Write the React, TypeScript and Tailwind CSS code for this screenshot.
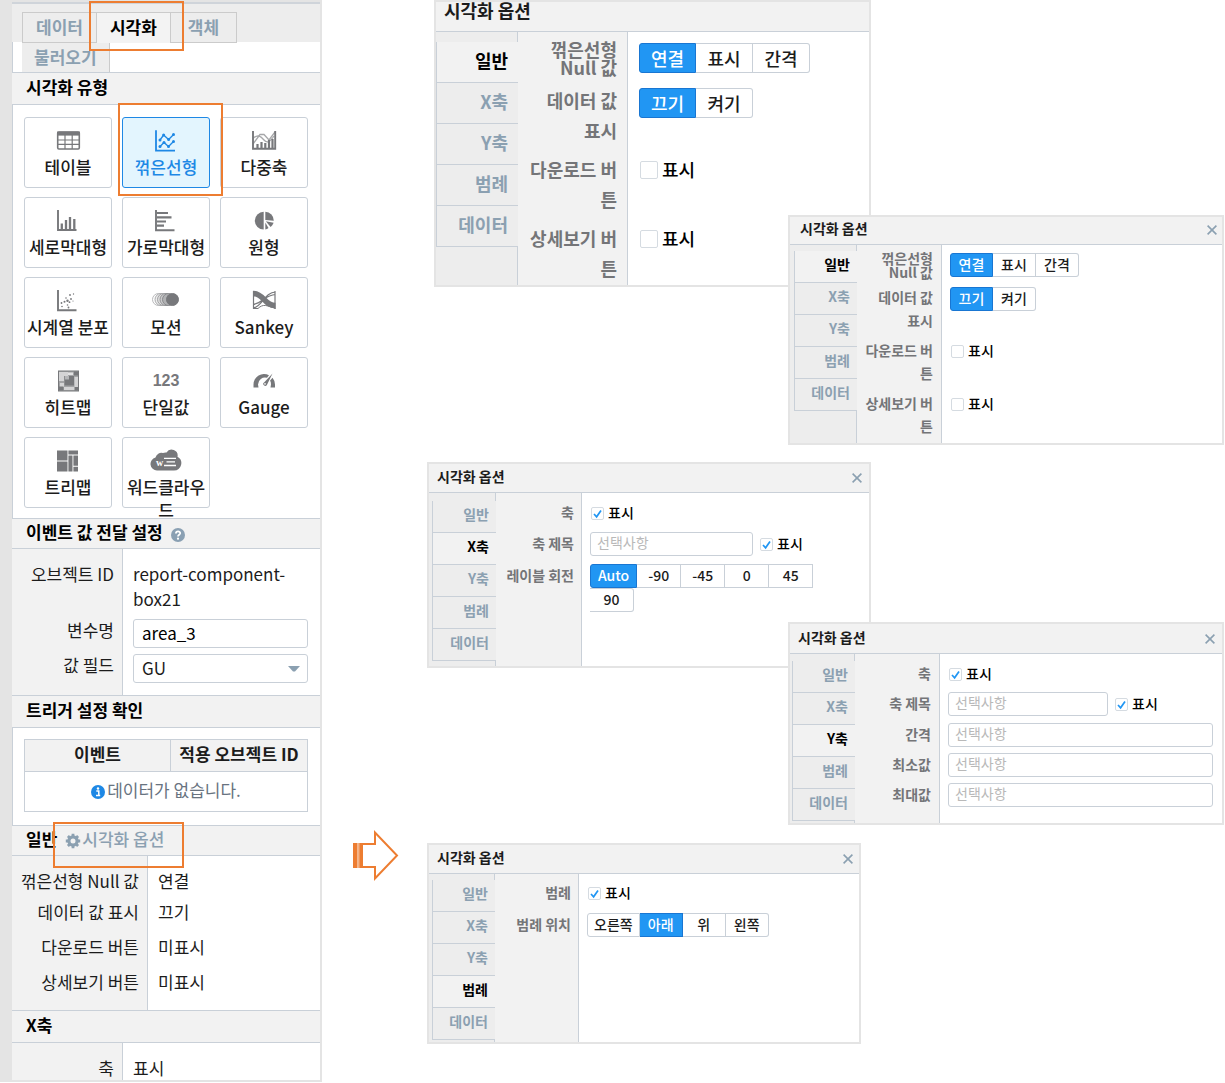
import { useState, type ReactNode } from "react";

/* ---------- icons ---------- */

function Icon({ children }: { children: ReactNode }) {
  return (
    <svg viewBox="0 0 32 24" className="h-6 w-8" fill="none" stroke="currentColor" aria-hidden="true">
      {children}
    </svg>
  );
}

const icons: Record<string, ReactNode> = {
  table: (
    <Icon>
      <rect x="5.7" y="3" width="21.6" height="17" rx="1.2" strokeWidth="1.6" />
      <path d="M5 4.6h23" strokeWidth="4" />
      <path d="M5 11h23M5 15.4h23M13 6v14M20.2 6v14" strokeWidth="1.2" />
    </Icon>
  ),
  line: (
    <Icon>
      <path d="M6 1.2v20.4h19" strokeWidth="1.8" />
      <path d="M10 11l3.600-5 5 4.500 5-5M10 17.500l4-4 4.500 4 5-5" strokeWidth="1.3" />
      <g fill="currentColor" stroke="none">
        <circle cx="10" cy="11" r="1.500" />
        <circle cx="13.600" cy="6" r="1.500" />
        <circle cx="18.600" cy="10.500" r="1.500" />
        <circle cx="23.500" cy="5.500" r="1.500" />
        <circle cx="10" cy="17.500" r="1.500" />
        <circle cx="14" cy="13.500" r="1.500" />
        <circle cx="18.500" cy="17.500" r="1.500" />
        <circle cx="23.500" cy="12.500" r="1.500" />
      </g>
    </Icon>
  ),
  multi: (
    <Icon>
      <path d="M5 2v17.800h22.200V2" strokeWidth="1.900" />
      <path d="M9.500 19v-4M13.500 19v-6M17.300 19v-5M21 19v-8M24.500 19v-9" strokeWidth="2.200" />
      <path d="M5 15L12 5.500h4L21 11l6-8M5 9.500c5-5 8-2 11 1.500s6 2 10-4" strokeWidth="1.300" opacity=".65" />
    </Icon>
  ),
  bar: (
    <Icon>
      <path d="M6 1v20h18.500" strokeWidth="1.900" />
      <path d="M9.800 20v-5.500M14 20V11M18 20V8M22.300 20V10" strokeWidth="2.300" />
    </Icon>
  ),
  hbar: (
    <Icon>
      <path d="M6 1v20.200h18.500" strokeWidth="1.900" />
      <path d="M7 4h11M7 8.300h14.500M7 12.500h9M7 16.700h7" strokeWidth="2.200" />
    </Icon>
  ),
  pie: (
    <Icon>
      <g fill="currentColor" stroke="none">
        <path d="M15.700 2.800A8.900 8.900 0 0 0 15.700 20.600Z" />
        <path d="M17.300 2.800a8.800 8.800 0 0 1 8.500 9l-8.500-.9Z" />
        <path d="M17.800 12.300l7.800 1.400a8.400 8.400 0 0 1-3 4.200Z" />
        <path d="M17.300 13.500l3.200 5.500a6 6 0 0 1-3.200 1.400Z" />
      </g>
    </Icon>
  ),
  scatter: (
    <Icon>
      <path d="M6 1v20.200h18.500" strokeWidth="1.900" />
      <g fill="currentColor" stroke="none">
        <circle cx="9.500" cy="14" r=".9" />
        <circle cx="12.500" cy="12.800" r="1" />
        <circle cx="15.500" cy="11.800" r="1.200" />
        <circle cx="17.500" cy="13.200" r=".9" />
        <circle cx="14" cy="9" r=".8" />
        <circle cx="18" cy="6" r=".9" />
        <circle cx="21.500" cy="5" r=".7" />
        <circle cx="19" cy="10" r=".9" />
        <circle cx="10" cy="17.500" r=".8" />
        <circle cx="15.500" cy="16" r=".8" />
        <circle cx="16.500" cy="18.500" r=".9" />
        <circle cx="21" cy="12" r=".6" />
      </g>
    </Icon>
  ),
  motion: (
    <Icon>
      <g fill="#fff" strokeWidth="1">
        <circle cx="8.500" cy="10.500" r="6" stroke="#b9babc" />
        <circle cx="11" cy="10.500" r="6" fill="#ececec" stroke="#a9aaac" />
        <circle cx="13.500" cy="10.500" r="6" fill="#dedede" stroke="#a0a1a3" />
        <circle cx="16" cy="10.500" r="6" fill="#cbcbcc" stroke="#929396" />
        <circle cx="18.500" cy="10.500" r="6" fill="#b0b1b3" stroke="#88898c" />
        <circle cx="22.500" cy="10.500" r="6" fill="currentColor" stroke="#77787b" />
      </g>
    </Icon>
  ),
  sankey: (
    <Icon>
      <path d="M5 4.500c11 0 11 12 22.500 12" strokeWidth="5.500" />
      <path d="M5 19C13 19 17 3 27.500 3M5 15.500c9-1 12-9.500 22.500-10M5.500 2v18M27 2v18" strokeWidth="1.200" />
      <path d="M5 19.500h5c5-5 9-3 17.500 0" strokeWidth="1" />
    </Icon>
  ),
  heatmap: (
    <Icon>
      <rect x="6.500" y="2" width="20" height="20" fill="#a3a4a6" stroke="#77787b" />
      <path d="M7 3h9v4h-4v5H7zM8 14h4v4H8zM12 18h11v3H12zM22.500 8H26v10h-3.500z" fill="#d4d4d5" stroke="none" />
      <path d="M16 3.500h5v2.500h-5z" fill="#e2e2e3" stroke="none" />
      <path d="M22 2.500h4.500v4H22zM7 17.500h4.500v4H7zM22.500 18h4v3.500h-4z" fill="#77787b" stroke="none" />
      <path d="M12.500 7h9.500v9.500h-9.500z" fill="#77787b" stroke="none" />
      <path d="M13 7h4v3.500h-4z" fill="#b5b6b8" stroke="none" />
    </Icon>
  ),
  gauge: (
    <Icon>
      <path d="M5.500 18.500v-3a10.500 10.500 0 0 1 15.500-9.300l-2 2.600A7 7 0 0 0 10 15.500l.5 3z" fill="currentColor" stroke="none" />
      <path d="M24.500 8.800a11 11 0 0 1 2.500 6.700v3h-4.500l.5-3a7 7 0 0 0-.9-4z" fill="currentColor" stroke="none" />
      <path d="M24.500 4.500l-8.200 8.800a1.900 1.900 0 1 0 2.600 2.600z" fill="currentColor" stroke="none" />
      <circle cx="17" cy="14.900" r=".8" fill="#fff" stroke="none" />
    </Icon>
  ),
  treemap: (
    <Icon>
      <path
        d="M5 1.500h10.500v10H5zM5 12.500h10.500V22.500H5zM16.400 1.500H26v3.900h-9.600zM16.400 6.400h4.100V22.500h-4.100zM21.400 6.400H26v10.300h-4.600zM21.400 17.700H26V22.500h-4.600z"
        fill="currentColor"
        stroke="none"
      />
    </Icon>
  ),
  cloud: (
    <Icon>
      <path
        d="M7 21.500a6.600 6.600 0 0 1-1.500-13A6 6 0 0 1 13 4a6.500 6.500 0 0 1 3.500-.5 6 6 0 0 1 11 4.300A7.300 7.300 0 0 1 24 21.500z"
        fill="currentColor"
        stroke="none"
      />
      <text x="6" y="17" fontSize="10" fontWeight="700" fontFamily="Liberation Serif, serif" fill="#fff" stroke="none">
        w
      </text>
      <path d="M14 9.300h12M16.500 12.900h8.500M14 16.500h12" stroke="#fff" strokeWidth="1.300" />
    </Icon>
  ),
};

function GearIcon() {
  return (
    <svg viewBox="0 0 16 16" className="mt-1 size-4" aria-hidden="true">
      <circle cx="8" cy="8" r="4.100" fill="none" stroke="currentColor" strokeWidth="3.200" />
      <path
        d="M8 .8v2.500M8 12.700v2.500M.8 8h2.500M12.700 8h2.500M2.900 2.900l1.800 1.800M11.300 11.300l1.800 1.800M2.900 13.100l1.800-1.800M11.300 4.700l1.800-1.800"
        stroke="currentColor"
        strokeWidth="2.800"
      />
    </svg>
  );
}

function HelpIcon() {
  return (
    <svg viewBox="0 0 14 14" className="size-3.5" aria-hidden="true">
      <circle cx="7" cy="7" r="7" fill="#8aa0b3" />
      <path d="M4.900 5.500C5 2.700 9.300 2.900 9.200 5.300 9.100 6.800 7 6.900 7 8.500" fill="none" stroke="#fff" strokeWidth="1.800" />
      <circle cx="7" cy="10.700" r="1.100" fill="#fff" />
    </svg>
  );
}

function InfoIcon() {
  return (
    <svg viewBox="0 0 14 14" className="mt-1 size-3.5" aria-hidden="true">
      <circle cx="7" cy="7" r="7" fill="#1e88e5" />
      <path d="M5.300 6h2.500v4.300M5 10.500h4.200" fill="none" stroke="#fff" strokeWidth="1.500" />
      <circle cx="7" cy="3.500" r="1.200" fill="#fff" />
    </svg>
  );
}

function Highlight({ className }: { className: string }) {
  return <span aria-hidden="true" className={`pointer-events-none absolute z-10 border-2 border-[#ed7d31] ${className}`} />;
}

/* ---------- sidebar ---------- */

const chartTypes = [
  ["table", "테이블"],
  ["line", "꺾은선형"],
  ["multi", "다중축"],
  ["bar", "세로막대형"],
  ["hbar", "가로막대형"],
  ["pie", "원형"],
  ["scatter", "시계열 분포"],
  ["motion", "모션"],
  ["sankey", "Sankey"],
  ["heatmap", "히트맵"],
  ["number", "단일값"],
  ["gauge", "Gauge"],
  ["treemap", "트리맵"],
  ["cloud", "워드클라우드"],
];

function SectionHeader({ title, compact, children }: { title: string; compact?: boolean; children?: ReactNode }) {
  return (
    <div
      className={`relative flex items-center border-b border-[#c9d0d8] bg-[#f2f2f2] pb-1 pl-3.5 ${
        compact ? "h-[30px]" : "h-8"
      }`}
    >
      <h2 className="font-bold text-black">{title}</h2>
      {children}
    </div>
  );
}

function PropRow({
  label,
  htmlFor,
  wide,
  pad,
  children,
}: {
  label: string;
  htmlFor?: string;
  wide?: boolean;
  pad: string;
  children: ReactNode;
}) {
  const cell = `shrink-0 border-r border-[#c9d0d8] bg-[#f2f2f2] text-right ${
    wide ? "w-[136px] pr-2" : "w-[111px] pr-2"
  } ${htmlFor ? "leading-[22px]" : "leading-[25px]"} ${pad}`;
  return (
    <div className="flex">
      <div className={cell}>{htmlFor ? <label htmlFor={htmlFor}>{label}</label> : label}</div>
      <div className={`min-w-0 flex-1 pl-2.5 pr-3 leading-[25px] ${pad}`}>{children}</div>
    </div>
  );
}

function Sidebar() {
  const [type, setType] = useState("line");
  return (
    <aside className="w-[322px] shrink-0 self-start border-b-2 border-l-[12px] border-r-2 border-t-2 border-[#e4e4e4] text-[17px] text-[#1c1c1c]">
      <nav className="border-t-2 border-[#cfd4da] font-bold text-[#8ba0b1]">
        <div className="flex h-[38px] bg-[#ededed] pl-2.5 pt-2">
          <button className="h-[31px] border border-[#cbcbcb] px-[13px] pb-0.5">데이터</button>
          <div className="relative">
            <button className="h-[31px] border-t border-[#cbcbcb] bg-[#f3f3f3] px-[13px] pb-0.5 text-black">시각화</button>
            <Highlight className="-bottom-[9px] -left-2 -right-3.5 -top-[11px]" />
          </div>
          <button className="h-[31px] border border-[#cbcbcb] px-[17px] pb-0.5">객체</button>
        </div>
        <div className="flex h-[31px] border-b border-l border-[#c9d0d8] pl-[9px]">
          <button className="border-r border-t border-[#cbcbcb] bg-[#ededed] px-3 pb-0.5">불러오기</button>
        </div>
      </nav>

      <section>
        <SectionHeader title="시각화 유형" />
        <div className="grid grid-cols-3 gap-x-2.5 gap-y-[9px] border-b border-l border-[#c9d0d8] pb-2.5 pl-[11px] pr-3 pt-3 font-medium">
          {chartTypes.map(([key, label]) => (
            <div key={key} className="relative">
              <button
                onClick={() => setType(key)}
                aria-pressed={type === key}
                className={`flex h-[71px] w-full flex-col items-center rounded-[3px] border pt-[11px] ${
                  type === key ? "border-[#1e88e5] bg-[#e3f5fe] text-[#1e88e5]" : "border-[#c9d0d8] text-[#1c1c1c]"
                }`}
              >
                <span className={type === key ? "" : "text-[#77787b]"}>
                  {key === "number" ? (
                    <span className="block h-6 font-['Liberation_Sans',sans-serif] text-base leading-6 font-bold">123</span>
                  ) : (
                    icons[key]
                  )}
                </span>
                <span className="mt-0.5 leading-[23px] break-all">{label}</span>
              </button>
              {key === "line" && <Highlight className="-bottom-2 -left-1 -right-[13px] -top-3.5" />}
            </div>
          ))}
        </div>
      </section>

      <section>
        <SectionHeader title="이벤트 값 전달 설정" compact>
          <button aria-label="도움말" className="ml-2 mt-1.5">
            <HelpIcon />
          </button>
        </SectionHeader>
        <div className="border-b border-[#c9d0d8]">
          <PropRow label="오브젝트 ID" pad="pt-3">
            report-component-box21
          </PropRow>
          <PropRow label="변수명" htmlFor="var-name" pad="pt-2">
            <input
              id="var-name"
              defaultValue="area_3"
              className="block h-[29px] w-full rounded-[3px] border border-[#c9d0d8] bg-white px-2 pb-0.5 text-black"
            />
          </PropRow>
          <PropRow label="값 필드" htmlFor="value-field" pad="pt-1.5 pb-3">
            <div className="relative">
              <select
                id="value-field"
                className="block h-[29px] w-full appearance-none rounded-[3px] border border-[#c9d0d8] bg-white px-2 pb-0.5"
              >
                <option>GU</option>
              </select>
              <svg viewBox="0 0 12 6" className="pointer-events-none absolute right-2 top-3 h-1.5 w-3" aria-hidden="true">
                <path d="M0 0h12L7 5.500H5z" fill="#8ba0b1" />
              </svg>
            </div>
          </PropRow>
        </div>
      </section>

      <section>
        <SectionHeader title="트리거 설정 확인" />
        <div className="border-b border-l border-[#c9d0d8] pb-[13px] pl-[11px] pr-3 pt-[11px]">
          <table className="w-full border-collapse">
            <thead>
              <tr className="h-8 bg-[#f2f2f2]">
                <th className="border border-[#c9d0d8] pb-1">이벤트</th>
                <th className="w-[137px] border border-[#c9d0d8] pb-1 whitespace-nowrap">적용 오브젝트 ID</th>
              </tr>
            </thead>
            <tbody>
              <tr className="h-10">
                <td colSpan={2} className="border border-[#c9d0d8] pb-1 text-[#68737f]">
                  <div className="flex items-center justify-center gap-0.5">
                    <InfoIcon />
                    데이터가 없습니다.
                  </div>
                </td>
              </tr>
            </tbody>
          </table>
        </div>
      </section>

      <section>
        <SectionHeader title="일반" compact>
          <button className="ml-2 flex items-center gap-px font-medium text-[#8ba0b1]">
            <GearIcon />
            시각화 옵션
          </button>
          <Highlight className="-top-1 left-[41px] h-[46px] w-[131px]" />
        </SectionHeader>
        <div className="border-b border-[#c9d0d8]">
          <PropRow wide label="꺾은선형 Null 값" pad="pt-3">
            연결
          </PropRow>
          <PropRow wide label="데이터 값 표시" pad="pt-1.5">
            끄기
          </PropRow>
          <PropRow wide label="다운로드 버튼" pad="pt-2.5">
            미표시
          </PropRow>
          <PropRow wide label="상세보기 버튼" pad="pt-2.5 pb-4">
            미표시
          </PropRow>
        </div>
      </section>

      <section>
        <SectionHeader title="X축" />
        <PropRow label="축" pad="pt-3">
          표시
        </PropRow>
      </section>
    </aside>
  );
}

/* ---------- option dialogs ---------- */

const tabNames = ["일반", "X축", "Y축", "범례", "데이터"];

function Check({ large, checked }: { large?: boolean; checked?: boolean }) {
  const box = large ? "size-[18px]" : "size-[13px]";
  return (
    <label className={`flex items-center gap-1 pl-px font-medium text-black ${large ? "h-[30px]" : "h-6"}`}>
      <span className="grid">
        <input
          type="checkbox"
          defaultChecked={checked}
          className={`peer appearance-none rounded-[2px] border border-[#d5dbe1] bg-white [grid-area:1/1] ${box}`}
        />
        <svg
          viewBox="0 0 13 13"
          className={`pointer-events-none hidden [grid-area:1/1] peer-checked:block ${box}`}
          aria-hidden="true"
        >
          <path d="M3 7l2.600 2.800L10 3.500" fill="none" stroke="#2196f3" strokeWidth="1.700" />
        </svg>
      </span>
      <span className="pb-0.5">표시</span>
    </label>
  );
}

function Segments({ options, initial, size }: { options: string[]; initial: number; size: string }) {
  const [active, setActive] = useState(initial);
  return (
    <div className="flex flex-wrap">
      {options.map((o, i) => (
        <button
          key={o}
          onClick={() => setActive(i)}
          aria-pressed={i === active}
          className={`border-y border-r pb-0.5 font-medium first:rounded-l-[3px] first:border-l last:rounded-r-[3px] ${size} ${
            i === active ? "border-[#1976d2] bg-[#2196f3] text-white" : "border-[#c9d0d8] bg-white text-[#1c1c1c]"
          }`}
        >
          {o}
        </button>
      ))}
    </div>
  );
}

function TextField({ id, className }: { id: string; className: string }) {
  return (
    <input
      id={id}
      placeholder="선택사항"
      className={`block h-6 min-w-0 rounded-[3px] border border-[#c9d0d8] bg-white px-1.5 pb-1 placeholder:text-[#b9b9b9] ${className}`}
    />
  );
}

/* One label / control line; both cells share the vertical padding so the label column stays filled. */
function Field({
  label,
  htmlFor,
  labelWidth,
  labelClass,
  fieldClass,
  children,
}: {
  label: ReactNode;
  htmlFor?: string;
  labelWidth: string;
  labelClass: string;
  fieldClass: string;
  children?: ReactNode;
}) {
  return (
    <div className="flex last:flex-1">
      <div
        className={`shrink-0 border-r border-[#c9d0d8] bg-[#f2f2f2] text-right font-bold break-all text-[#747578] ${labelWidth} ${labelClass}`}
      >
        {htmlFor ? <label htmlFor={htmlFor}>{label}</label> : label}
      </div>
      <div className={`min-w-0 flex-1 ${fieldClass}`}>{children}</div>
    </div>
  );
}

function TwoLines({ first, second }: { first: string; second: string }) {
  return (
    <>
      {first}
      <br />
      {second}
    </>
  );
}

function Dialog({
  active,
  large,
  className,
  headClass,
  navClass,
  stripClass,
  children,
}: {
  active: number;
  large?: boolean;
  className: string;
  headClass: string;
  navClass: string;
  stripClass: string;
  children: ReactNode;
}) {
  const [tab, setTab] = useState(active);
  return (
    <section
      className={`relative flex flex-col border-2 border-[#e4e4e4] bg-white ${large ? "text-lg" : "text-sm"} ${className}`}
    >
      <header className={`flex items-center justify-between border-b border-[#c9d0d8] bg-[#f2f2f2] ${headClass}`}>
        <h2 className="font-bold text-[#1c1c1c]">시각화 옵션</h2>
        {!large && (
          <button aria-label="닫기" className="mt-1">
            <svg viewBox="0 0 10 10" className="size-2.5" aria-hidden="true">
              <path d="M.6.6l8.800 8.800M9.400.6L.6 9.400" stroke="#8ba0b1" strokeWidth="1.600" />
            </svg>
          </button>
        )}
      </header>
      <div className="flex flex-1">
        <nav className={`flex shrink-0 flex-col bg-[#ededed] font-bold ${navClass}`}>
          <div className={`border-r border-[#c9d0d8] ${stripClass}`} />
          {tabNames.map((name, i) => (
            <button
              key={name}
              onClick={() => setTab(i)}
              aria-current={i === tab}
              className={`border-b border-l border-[#c9d0d8] text-right ${large ? "h-[41px] pb-1 pr-2.5" : "h-8 pb-1.5 pr-[7px]"} ${
                i === tab ? "bg-[#f2f2f2] text-black" : "text-[#8ba0b1]"
              }`}
            >
              {name}
            </button>
          ))}
          <div className="flex-1 border-r border-[#c9d0d8]" />
        </nav>
        <div className="flex min-w-0 flex-1 flex-col">{children}</div>
      </div>
    </section>
  );
}

function Dialogs() {
  return (
    <main className="flex min-w-[780px] flex-1 flex-col">
      <Dialog
        large
        active={0}
        className="ml-[7px] mr-[354px] h-[287px]"
        headClass="h-[30px] px-2 pb-3.5"
        navClass="w-[82px]"
        stripClass="h-2.5"
      >
        <Field
          label={<TwoLines first="꺾은선형" second="Null 값" />}
          labelWidth="w-[110px]"
          labelClass="pr-2.5 pt-2 pb-[9px] leading-[18px]"
          fieldClass="pl-[11px] pt-[11px]"
        >
          <Segments size="h-[30px] min-w-[57px] px-2.5" options={["연결", "표시", "간격"]} initial={0} />
        </Field>
        <Field
          label={<TwoLines first="데이터 값" second="표시" />}
          labelWidth="w-[110px]"
          labelClass="pr-2.5 pb-[9px] leading-[30px]"
          fieldClass="pl-[11px] pt-[3px]"
        >
          <Segments size="h-[30px] min-w-[57px] px-2.5" options={["끄기", "켜기"]} initial={0} />
        </Field>
        <Field
          label={<TwoLines first="다운로드 버" second="튼" />}
          labelWidth="w-[110px]"
          labelClass="pr-2.5 pb-[9px] leading-[30px]"
          fieldClass="pl-[11px] pt-px"
        >
          <Check large />
        </Field>
        <Field
          label={<TwoLines first="상세보기 버" second="튼" />}
          labelWidth="w-[110px]"
          labelClass="pr-2.5 leading-[30px]"
          fieldClass="pl-[11px] pt-px"
        >
          <Check large />
        </Field>
      </Dialog>

      <Dialog
        active={0}
        className="-mt-[72px] ml-[361px] mr-px h-[230px]"
        headClass="h-7 pb-1.5 pl-2.5 pr-[5px]"
        navClass="w-[67px] pl-1"
        stripClass="h-1.5"
      >
        <Field
          label={<TwoLines first="꺾은선형" second="Null 값" />}
          labelWidth="w-[85px]"
          labelClass="pr-2 pt-1.5 pb-[7px] leading-[14px]"
          fieldClass="pl-2 pt-2"
        >
          <Segments size="h-6 min-w-[43px] px-1.5" options={["연결", "표시", "간격"]} initial={0} />
        </Field>
        <Field
          label={<TwoLines first="데이터 값" second="표시" />}
          labelWidth="w-[85px]"
          labelClass="pr-2 pb-[7px] leading-[23px]"
          fieldClass="pl-2 pt-px"
        >
          <Segments size="h-6 min-w-[43px] px-1.5" options={["끄기", "켜기"]} initial={0} />
        </Field>
        <Field
          label={<TwoLines first="다운로드 버" second="튼" />}
          labelWidth="w-[85px]"
          labelClass="pr-2 pb-[7px] leading-[23px]"
          fieldClass="pl-2"
        >
          <Check />
        </Field>
        <Field
          label={<TwoLines first="상세보기 버" second="튼" />}
          labelWidth="w-[85px]"
          labelClass="pr-2 leading-[23px]"
          fieldClass="pl-2"
        >
          <Check />
        </Field>
      </Dialog>

      <Dialog
        active={1}
        className="mr-[354px] mt-[17px] h-[206px]"
        headClass="h-[29px] pb-1 pl-2 pr-[7px]"
        navClass="w-[67px] pl-[3px]"
        stripClass="h-2"
      >
        <Field label="축" labelWidth="w-[86px]" labelClass="pr-[7px] pt-2 leading-[23px]" fieldClass="pl-2 pt-2">
          <Check checked />
        </Field>
        <Field
          label="축 제목"
          htmlFor="x-title"
          labelWidth="w-[86px]"
          labelClass="pr-[7px] pt-[7px] leading-[23px]"
          fieldClass="flex gap-1.5 pl-2 pt-[7px]"
        >
          <TextField id="x-title" className="w-[163px]" />
          <Check checked />
        </Field>
        <Field label="레이블 회전" labelWidth="w-[86px]" labelClass="pr-[7px] pt-2 leading-[23px]" fieldClass="pl-2 pr-10 pt-2">
          <Segments size="h-6 min-w-[44px] px-[7px]" options={["Auto", "-90", "-45", "0", "45", "90"]} initial={0} />
        </Field>
      </Dialog>

      <Dialog
        active={2}
        className="-mt-[46px] ml-[361px] mr-px h-[203px]"
        headClass="h-[30px] pb-1 pl-2 pr-[7px]"
        navClass="w-[65px] pl-0.5"
        stripClass="h-[7px]"
      >
        <Field label="축" labelWidth="w-[85px]" labelClass="pr-2 pt-2 leading-[23px]" fieldClass="pl-2 pt-2">
          <Check checked />
        </Field>
        <Field
          label="축 제목"
          htmlFor="y-title"
          labelWidth="w-[85px]"
          labelClass="pr-2 pt-1.5 leading-[23px]"
          fieldClass="flex gap-1.5 pl-2 pt-1.5"
        >
          <TextField id="y-title" className="w-[160px]" />
          <Check checked />
        </Field>
        <Field label="간격" htmlFor="y-gap" labelWidth="w-[85px]" labelClass="pr-2 pt-[7px] leading-[23px]" fieldClass="pl-2 pr-[9px] pt-[7px]">
          <TextField id="y-gap" className="w-full" />
        </Field>
        <Field label="최소값" htmlFor="y-min" labelWidth="w-[85px]" labelClass="pr-2 pt-1.5 leading-[23px]" fieldClass="pl-2 pr-[9px] pt-1.5">
          <TextField id="y-min" className="w-full" />
        </Field>
        <Field label="최대값" htmlFor="y-max" labelWidth="w-[85px]" labelClass="pr-2 pt-1.5 leading-[23px]" fieldClass="pl-2 pr-[9px] pt-1.5">
          <TextField id="y-max" className="w-full" />
        </Field>
      </Dialog>

      <Dialog
        active={3}
        className="mr-[364px] mt-[18px] h-[201px]"
        headClass="h-[29px] pb-1 pl-2 pr-[6px]"
        navClass="w-[66px] pl-[3px]"
        stripClass="h-1.5"
      >
        <Field label="범례" labelWidth="w-[84px]" labelClass="pr-[7px] pt-[7px] leading-[23px]" fieldClass="pl-2 pt-[7px]">
          <Check checked />
        </Field>
        <Field label="범례 위치" labelWidth="w-[84px]" labelClass="pr-[7px] pt-2 leading-[23px]" fieldClass="pl-2 pt-2">
          <Segments size="h-6 min-w-[43px] px-1.5" options={["오른쪽", "아래", "위", "왼쪽"]} initial={1} />
        </Field>
      </Dialog>
    </main>
  );
}

export default function App() {
  return (
    <div className="flex bg-white font-['Noto_Sans_CJK_KR','Noto_Sans',sans-serif]">
      <Sidebar />
      <div className="w-[105px] shrink-0 pl-[31px] pt-[830px]">
        <svg viewBox="0 0 46 51" className="h-[51px] w-[46px]" aria-hidden="true">
          <path d="M0 13h4.500v25H0z" fill="#ed7d31" />
          <path d="M4.500 13h4v25h-4z" fill="#f4b183" />
          <path d="M6.500 13h2v25h-2z" fill="#ed7d31" />
          <path d="M9 14h13V2.500L44 25.500 22 48.500V37H9z" fill="#fff" stroke="#ed7d31" strokeWidth="2" />
        </svg>
      </div>
      <Dialogs />
    </div>
  );
}
